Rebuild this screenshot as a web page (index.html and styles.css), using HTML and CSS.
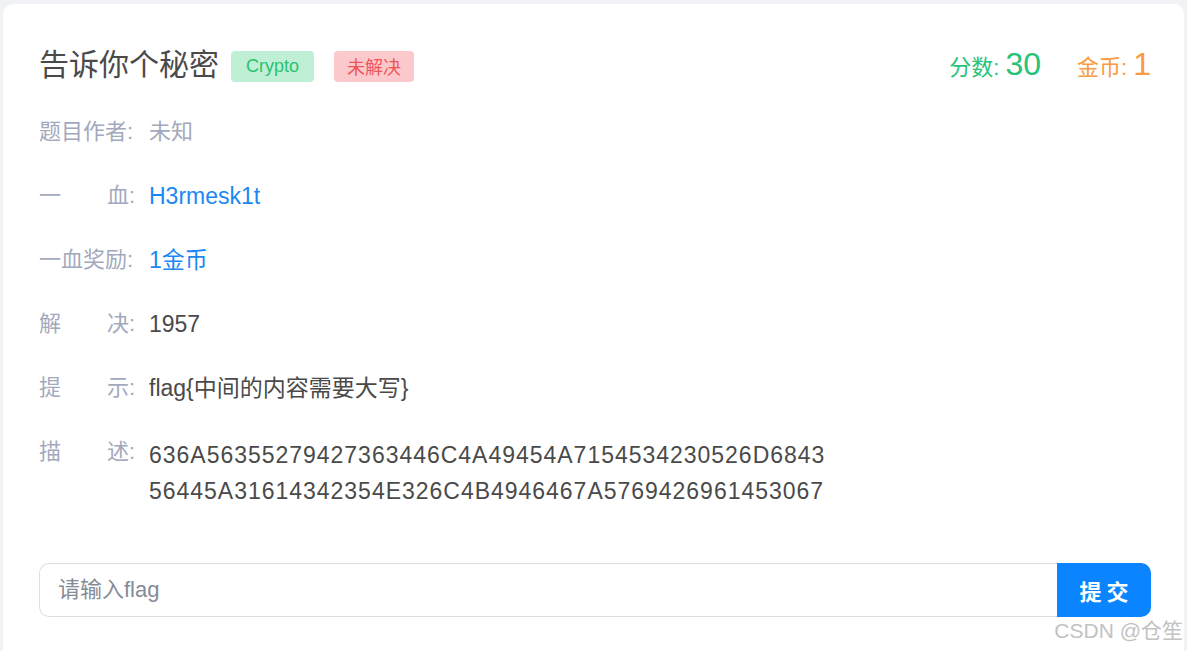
FILE: index.html
```html
<!DOCTYPE html>
<html lang="zh">
<head>
<meta charset="utf-8">
<title>告诉你个秘密</title>
<link rel="stylesheet" href="styles.css">
</head>
<body>
<div class="card">
  <div class="head">
    <div class="head-left">
      <h1 class="title">告诉你个秘密</h1>
      <span class="badge badge-green">Crypto</span>
      <span class="badge badge-red">未解决</span>
    </div>
    <div class="stats">
      <span class="stat stat-green">分数: <b class="num">30</b></span>
      <span class="stat stat-orange">金币: <b class="num">1</b></span>
    </div>
  </div>

  <div class="info">
    <div class="row">
      <div class="label"><span>题目作者:</span></div>
      <div class="value muted">未知</div>
    </div>
    <div class="row">
      <div class="label"><span>一</span><span>血:</span></div>
      <div class="value link">H3rmesk1t</div>
    </div>
    <div class="row">
      <div class="label"><span>一血奖励:</span></div>
      <div class="value link">1金币</div>
    </div>
    <div class="row">
      <div class="label"><span>解</span><span>决:</span></div>
      <div class="value">1957</div>
    </div>
    <div class="row">
      <div class="label"><span>提</span><span>示:</span></div>
      <div class="value">flag{中间的内容需要大写}</div>
    </div>
    <div class="row">
      <div class="label"><span>描</span><span>述:</span></div>
      <div class="value desc">636A56355279427363446C4A49454A7154534230526D6843<br>56445A31614342354E326C4B4946467A5769426961453067</div>
    </div>
  </div>

  <form class="submit">
    <input class="flag-input" type="text" placeholder="请输入flag">
    <button class="btn" type="button">提交</button>
  </form>
</div>
<div class="watermark">CSDN @仓笙</div>
</body>
</html>
```

FILE: styles.css
```css
html, body {
  margin: 0;
  padding: 0;
}
body {
  background: #f0f2f5;
  font-family: "Liberation Sans", "Noto Sans CJK SC", sans-serif;
  color: #4a4a4a;
  height: 651px;
  overflow: hidden;
  position: relative;
}
.card {
  margin: 4px 3px 0 3px;
  background: #fff;
  border-radius: 10px;
  padding: 26px 33px 60px 36px;
}
.head {
  display: flex;
  justify-content: space-between;
  align-items: center;
  height: 70px;
}
.head-left {
  display: flex;
  align-items: center;
}
.title {
  margin: 0 12px 0 0;
  font-size: 30px;
  font-weight: normal;
  color: #4a4a4a;
  line-height: 40px;
}
.badge {
  display: inline-flex;
  align-items: center;
  height: 31px;
  padding: 0 15px;
  border-radius: 4px;
  font-size: 18px;
  margin-top: 2px;
}
.badge-green {
  background: #bff0d6;
  color: #2ac172;
}
.badge-red {
  background: #fbc9cc;
  color: #f0545b;
  margin-left: 20px;
  padding: 0 13px;
}
.stats {
  display: flex;
  align-items: baseline;
  gap: 36px;
  margin-top: -2px;
}
.stat {
  font-size: 22px;
}
.num {
  font-weight: normal;
  font-size: 32px;
}
.stat-green { color: #27c27a; }
.stat-orange { color: #f99a45; }

.info {
  display: flex;
  flex-direction: column;
  gap: 32px;
  margin-top: 16px;
}
.row {
  display: flex;
  align-items: flex-start;
  font-size: 22px;
  line-height: 32px;
}
.label {
  width: 96px;
  flex: none;
  display: flex;
  justify-content: space-between;
  color: #a3a9bc;
  margin-right: 14px;
}
.value {
  color: #4a4a4a;
  font-size: 23px;
}
.value.muted { color: #a3a9bc; font-size: 22px; }
.value.link { color: #1a87f5; }
.value.desc {
  line-height: 36px;
  letter-spacing: 0.98px;
  margin-top: 1px;
}

.submit {
  display: flex;
  margin: 54px 0 0 0;
  height: 54px;
}
.flag-input {
  flex: 1;
  min-width: 0;
  box-sizing: border-box;
  height: 54px;
  border: 1px solid #dcdfe3;
  border-right: none;
  border-radius: 10px 0 0 10px;
  padding: 0 18px;
  font-family: "Liberation Sans", "Noto Sans CJK SC", sans-serif;
  font-size: 22px;
  color: #4a4a4a;
  outline: none;
}
.flag-input::placeholder {
  color: #858b96;
}
.btn {
  width: 94px;
  height: 54px;
  border: none;
  border-radius: 0 10px 10px 0;
  background: #0a84ff;
  color: #fff;
  font-family: "Liberation Sans", "Noto Sans CJK SC", sans-serif;
  font-size: 22px;
  font-weight: bold;
  letter-spacing: 5px;
  padding: 0 0 0 5px;
}
.watermark {
  position: absolute;
  right: 4px;
  bottom: 7px;
  font-size: 21px;
  color: #c2c2c2;
  text-shadow: 0 0 2px #fff;
  font-family: "Liberation Sans", "Noto Sans CJK SC", sans-serif;
}
```
